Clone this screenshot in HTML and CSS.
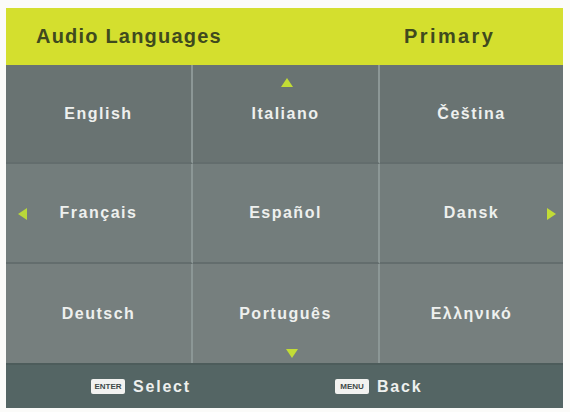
FILE: index.html
```html
<!DOCTYPE html>
<html lang="en">
<head>
    <meta charset="UTF-8">
    <title>Audio Languages</title>
    <link rel="stylesheet" href="styles.css">
</head>
<body>
    <div class="osd">
        <div class="osd-header">
            <span class="title">Audio Languages</span>
            <span class="mode">Primary</span>
        </div>
        <div class="lang-grid">
            <div class="cell row-1">English</div>
            <div class="cell row-1">Italiano<span class="arrow up"></span></div>
            <div class="cell row-1">Čeština</div>
            <div class="cell row-2"><span class="arrow left"></span>Français</div>
            <div class="cell row-2">Español</div>
            <div class="cell row-2">Dansk<span class="arrow right"></span></div>
            <div class="cell row-3">Deutsch</div>
            <div class="cell row-3">Português<span class="arrow down"></span></div>
            <div class="cell row-3">Ελληνικό</div>
        </div>
        <div class="osd-footer">
            <div class="hint hint-select"><span class="key">ENTER</span>Select</div>
            <div class="hint"><span class="key">MENU</span>Back</div>
        </div>
    </div>
</body>
</html>
```

FILE: styles.css
```css
* {
    margin: 0;
    padding: 0;
    box-sizing: border-box;
    font-family: "Liberation Sans", Arial, sans-serif;
}

body {
    background-color: #fbfbf9;
    width: 570px;
    height: 412px;
    overflow: hidden;
}

.osd {
    margin: 8px 7px 0 6px;
    height: 400px;
    display: flex;
    flex-direction: column;
    background-color: #6c7675;
}

.osd-header {
    height: 57px;
    background-color: #d4df2e;
    display: flex;
    align-items: center;
    padding-left: 30px;
    color: #3f4a1e;
    font-size: 20px;
    font-weight: bold;
    letter-spacing: 1.2px;
}

.osd-header .title {
    width: 368px;
}

.osd-header .mode {
    letter-spacing: 2.4px;
}

.lang-grid {
    display: grid;
    grid-template-columns: 187px 187px 1fr;
    grid-template-rows: 99px 100px 99px;
}

.cell {
    position: relative;
    display: flex;
    align-items: center;
    justify-content: center;
    color: #eef0ee;
    font-size: 16px;
    font-weight: bold;
    letter-spacing: 1.5px;
    border-right: 2px solid #8c9796;
    border-bottom: 2px solid #636d6d;
}

.cell:nth-child(3n) {
    border-right: none;
}

.row-1 {
    background-color: #697372;
}

.row-2 {
    background-color: #737d7c;
}

.row-3 {
    background-color: #767f7e;
    border-bottom: none;
}

/* scroll arrows */
.arrow {
    position: absolute;
    width: 0;
    height: 0;
}

.arrow.up {
    top: 13px;
    left: 88px;
    border-left: 6px solid transparent;
    border-right: 6px solid transparent;
    border-bottom: 9px solid #c2dc36;
}

.arrow.down {
    bottom: 5px;
    left: 93px;
    border-left: 6px solid transparent;
    border-right: 6px solid transparent;
    border-top: 9px solid #c2dc36;
}

.arrow.left {
    top: 44px;
    left: 12px;
    border-top: 6px solid transparent;
    border-bottom: 6px solid transparent;
    border-right: 9px solid #b9d83a;
}

.arrow.right {
    top: 44px;
    right: 7px;
    border-top: 6px solid transparent;
    border-bottom: 6px solid transparent;
    border-left: 9px solid #c2dc36;
}

.osd-footer {
    flex: 1;
    display: flex;
    align-items: center;
    padding-left: 85px;
    background-color: #546564;
    border-top: 2px solid #4d5c5b;
}

.hint {
    display: flex;
    align-items: center;
    color: #eef0ee;
    font-size: 16px;
    font-weight: bold;
    letter-spacing: 1.8px;
}

.hint-select {
    width: 244px;
}

.key {
    display: inline-flex;
    align-items: center;
    justify-content: center;
    width: 34px;
    height: 15px;
    background-color: #f2f2f0;
    color: #3e4a4a;
    font-size: 8px;
    font-weight: bold;
    letter-spacing: 0;
    border-radius: 2px;
    margin-right: 8px;
}

.hint .key + * {
    margin-left: 0;
}
```
